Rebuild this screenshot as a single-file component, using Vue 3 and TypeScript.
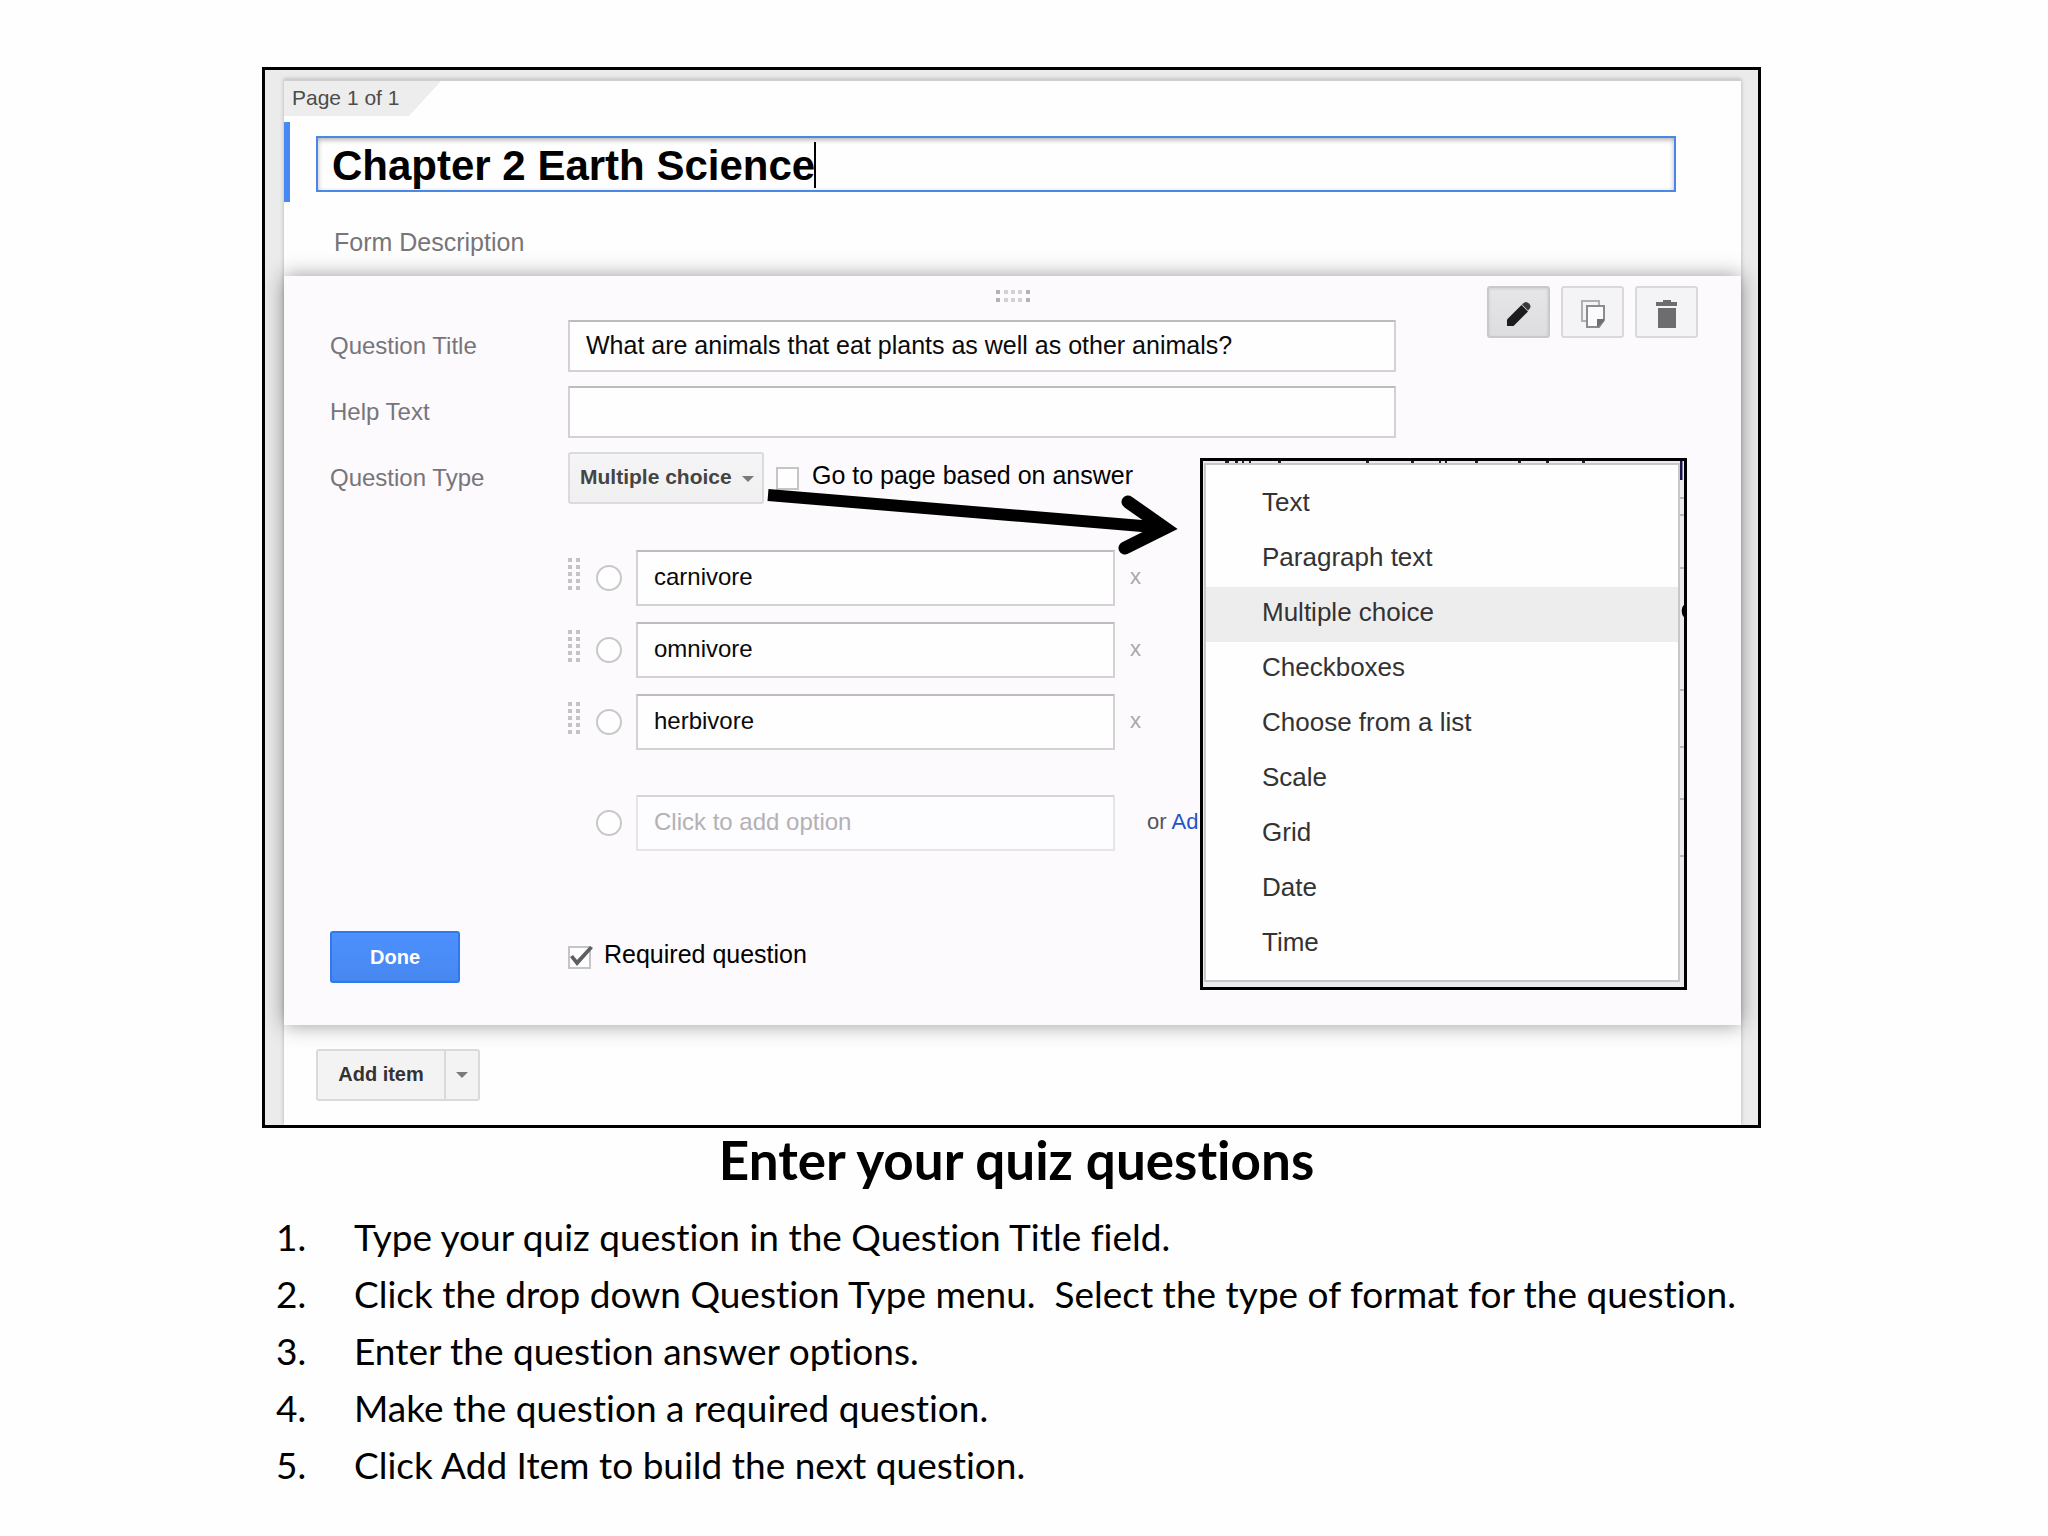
<script setup lang="ts">
import { ref } from 'vue'

interface Option {
  id: string
  text: string
}

const formTitle = ref('Chapter 2 Earth Science')
const questionTitle = ref('What are animals that eat plants as well as other animals?')
const helpText = ref('')
const questionType = ref('Multiple choice')
const goToPage = ref(false)
const required = ref(true)

const options = ref<Option[]>([
  { id: 'option-1', text: 'carnivore' },
  { id: 'option-2', text: 'omnivore' },
  { id: 'option-3', text: 'herbivore' },
])

const questionTypes: string[] = [
  'Text',
  'Paragraph text',
  'Multiple choice',
  'Checkboxes',
  'Choose from a list',
  'Scale',
  'Grid',
  'Date',
  'Time',
]

const steps: string[] = [
  'Type your quiz question in the Question Title field.',
  'Click the drop down Question Type menu.\u00a0 Select the type of format for the question.',
  'Enter the question answer options.',
  'Make the question a required question.',
  'Click Add Item to build the next question.',
]

const gripRows: number[] = [2, 9, 16, 23, 30]
const gripColumns: number[] = [0, 8, 15, 22, 30]
</script>

<template>
  <main class="slide">
    <section class="frame">
      <div class="page">
        <div class="page-tab">Page 1 of 1</div>

        <div class="title-row">
          <div class="title-box">
            <input v-model="formTitle" class="title-input" type="text" aria-label="Form title" />
            <span class="caret"></span>
          </div>
        </div>
        <p class="description">Form Description</p>

        <form class="panel" @submit.prevent>
          <div class="grip-row">
            <svg width="34" height="12" viewBox="0 0 34 12" aria-hidden="true">
              <g v-for="x in gripColumns" :key="x" :fill="x === 0 || x === 30 ? '#b3b1b4' : '#d3d1d4'">
                <rect :x="x" y="0" width="4" height="4" />
                <rect :x="x" y="8" width="4" height="4" />
              </g>
            </svg>
          </div>

          <div class="panel-body">
            <div class="fields">
              <div class="row">
                <label for="question-title">Question Title</label>
                <input id="question-title" v-model="questionTitle" class="text-input" type="text" />
              </div>
              <div class="row">
                <label for="help-text">Help Text</label>
                <input id="help-text" v-model="helpText" class="text-input" type="text" />
              </div>
              <div class="row">
                <label for="question-type">Question Type</label>
                <div class="select-box">
                  <select id="question-type" v-model="questionType">
                    <option v-for="type in questionTypes" :key="type">{{ type }}</option>
                  </select>
                </div>
                <input id="go-to-page" v-model="goToPage" class="check" type="checkbox" />
                <label class="check-label" for="go-to-page">Go to page based on answer</label>
              </div>
            </div>

            <div class="tools">
              <button class="tool active" type="button" aria-label="Edit">
                <svg width="28" height="28" viewBox="0 0 28 28">
                  <path d="M2 19.500 16.500 5l6.500 6.500L8.500 26H2z" fill="#1c1b1e" />
                  <path d="M18 3.500c2-2 4-2 6 0s2 4 0 6l-1 1-6-6z" fill="#3a383c" />
                </svg>
              </button>
              <button class="tool" type="button" aria-label="Duplicate">
                <svg width="28" height="30" viewBox="0 0 28 30" fill="none">
                  <path d="M7 22H3V2h17v4" stroke="#b0afb1" stroke-width="2" />
                  <path d="M8 7h17v14l-5 7H8z" fill="#fbfafc" stroke="#8c8b8e" stroke-width="2" />
                  <path d="M25 20v2l-6 6h-1v-8z" fill="#6f6e71" />
                </svg>
              </button>
              <button class="tool" type="button" aria-label="Delete">
                <svg width="24" height="30" viewBox="0 0 24 30" fill="#6d6c6e">
                  <path d="M8 1h8v2h6v4H1V3h7z" />
                  <path d="M3 9h18v20H3z" />
                </svg>
              </button>
            </div>
          </div>

          <div class="options">
            <div v-for="option in options" :key="option.id" class="option">
              <svg class="option-grip" width="12" height="34" viewBox="0 0 12 34" aria-hidden="true">
                <g v-for="y in gripRows" :key="y" fill="#c4c2c5">
                  <rect x="0" :y="y - 2" width="4" height="4" />
                  <rect x="8" :y="y - 2" width="4" height="4" />
                </g>
              </svg>
              <input class="radio" type="radio" name="answer" :aria-label="option.text" />
              <input v-model="option.text" class="option-input" type="text" :aria-label="option.id" />
              <button class="remove" type="button">x</button>
            </div>
            <div class="option new-option">
              <span class="option-grip"></span>
              <input class="radio" type="radio" name="answer" aria-label="New option" />
              <input
                class="option-input"
                type="text"
                placeholder="Click to add option"
                aria-label="Add option"
              />
              <span class="other">or <a href="#">Ad</a></span>
            </div>
          </div>

          <div class="footer">
            <div class="footer-action">
              <button class="done" type="submit">Done</button>
            </div>
            <span class="tick-box">
              <input id="required" v-model="required" class="check" type="checkbox" />
              <svg v-if="required" class="tick" width="26" height="24" viewBox="0 0 26 24" aria-hidden="true">
                <path d="M2 11 5 9l4 5L22 0l3 2L9 20z" fill="#5f5e61" />
              </svg>
            </span>
            <label class="check-label" for="required">Required question</label>
          </div>

          <svg class="arrow" width="420" height="76" viewBox="0 0 420 76" aria-hidden="true">
            <path d="M4 14 402 47" stroke="#000" stroke-width="12" />
            <path
              d="M364 21 401 47 361 67"
              fill="none"
              stroke="#000"
              stroke-width="13"
              stroke-linecap="round"
              stroke-linejoin="miter"
            />
          </svg>

          <div class="popup">
            <svg class="popup-top" width="378" height="3" viewBox="0 0 378 3" aria-hidden="true">
              <path
                d="M2 1h4M12 1h3M19 1h2M26 1h2M55 1h3M143 1h3M188 1h3M216 1h2M222 1h2M252 1h3M295 1h3M323 1h3M359 1h3"
                stroke="#222"
                stroke-width="2"
              />
            </svg>
            <ul class="menu">
              <li v-for="type in questionTypes" :key="type">
                <button
                  type="button"
                  class="menu-item"
                  :class="{ selected: type === questionType }"
                  @click="questionType = type"
                >
                  {{ type }}
                </button>
              </li>
            </ul>
            <svg class="popup-edge" width="4" height="526" viewBox="0 0 4 526" aria-hidden="true">
              <path d="M1 0v19" stroke="#1a1550" stroke-width="3" />
              <path d="M0 37h4M0 54h4M0 107h4M0 229h4M0 286h4M0 338h4M0 395h4" stroke="#b9b8bb" stroke-width="2" />
              <path d="M4 144v12c-3-2-3-10 0-12z" fill="#000" />
            </svg>
          </div>
        </form>

        <div class="add-item">
          <button class="add-main" type="button">Add item</button>
          <button class="add-more" type="button" aria-label="More item types"></button>
        </div>
      </div>
    </section>

    <section class="notes">
      <h1>Enter your quiz questions</h1>
      <ol>
        <li v-for="step in steps" :key="step">{{ step }}</li>
      </ol>
    </section>
  </main>
</template>

<style>
body {
  margin: 0;
  background: #fefefe;
}
</style>

<style scoped>
* {
  box-sizing: border-box;
}

.slide {
  padding: 67px 287px 0 262px;
  font-family: 'Liberation Sans', Arial, sans-serif;
  color: #000;
}

input,
button,
select {
  margin: 0;
  font-family: inherit;
}

button {
  padding: 0;
}

.frame {
  border: 3px solid #000;
  padding: 9px 17px 0 19px;
  background: #ebebeb;
  overflow: hidden;
}

.page {
  border-top: 2px solid #cfcfcf;
  background: #fefefe;
  box-shadow: 0 0 4px rgba(0, 0, 0, 0.25);
}

.page-tab {
  width: 157px;
  height: 35px;
  padding-left: 8px;
  background: #ededed;
  clip-path: polygon(0 0, 100% 0, 125px 100%, 0 100%);
  color: #4c4c4c;
  font-size: 21px;
  line-height: 34px;
}

.title-row {
  margin-top: 6px;
  padding: 14px 65px 10px 26px;
  border-left: 6px solid #4689f5;
}

.title-box {
  position: relative;
  display: flex;
}

.title-input {
  flex: 1;
  min-width: 0;
  height: 56px;
  padding: 4px 14px 0;
  border: 2px solid #4b87e6;
  outline: none;
  background: #fefefe;
  box-shadow: inset 0 2px 5px rgba(0, 0, 0, 0.3);
  color: #000;
  font-size: 42px;
  font-weight: 700;
}

.caret {
  position: absolute;
  top: 6px;
  left: 498px;
  width: 2px;
  height: 46px;
  background: #000;
}

.description {
  margin: 0;
  padding: 25px 50px 19px;
  color: #77757a;
  font-size: 25px;
  line-height: 30px;
}

.panel {
  position: relative;
  padding: 0 43px 42px 46px;
  background: #fcfafd;
  box-shadow: 0 0 20px rgba(0, 0, 0, 0.4);
}

.grip-row {
  display: flex;
  justify-content: center;
  height: 44px;
  padding: 14px 3px 0 0;
}

.panel-body {
  display: flex;
  gap: 91px;
}

.fields {
  flex: 1;
  min-width: 0;
  display: flex;
  flex-direction: column;
  gap: 14px;
}

.row {
  display: flex;
  align-items: center;
  height: 52px;
}

.row > label:first-child {
  flex: none;
  width: 238px;
  color: #77757a;
  font-size: 24px;
}

.text-input,
.option-input {
  border: 2px solid #d3d1d4;
  border-top-color: #bdbbbe;
  background: #fefefe;
  color: #0a0a0a;
  outline: none;
}

.text-input {
  flex: 1;
  min-width: 0;
  height: 52px;
  padding: 0 16px 2px;
  font-size: 25px;
}

.select-box {
  position: relative;
}

.select-box::after,
.add-more::after {
  content: '';
  border: 6px solid transparent;
  border-top-color: #7a797b;
  border-bottom: 0;
}

.select-box::after {
  position: absolute;
  top: 24px;
  right: 10px;
}

select {
  appearance: none;
  display: block;
  width: 196px;
  height: 52px;
  padding: 0 10px 3px;
  border: 2px solid #dbdadc;
  border-radius: 3px;
  background: linear-gradient(#f5f4f6, #f0f0f0);
  color: #444;
  font-size: 21px;
  font-weight: 700;
}

.check {
  appearance: none;
  flex: none;
  width: 23px;
  height: 23px;
  border: 2px solid #c5c4c6;
  background: #fefefe;
}

.row .check {
  margin-left: 12px;
}

.check-label {
  padding: 0 0 5px 13px;
  font-size: 25px;
  white-space: nowrap;
}

.tools {
  display: flex;
  gap: 11px;
  height: 52px;
  margin-top: -34px;
}

.tool {
  display: flex;
  align-items: center;
  justify-content: center;
  width: 63px;
  height: 52px;
  padding-top: 4px;
  border: 2px solid #d9d8da;
  border-radius: 3px;
  background: #f4f3f5;
}

.tool.active {
  border-color: #c9c8ca;
  background: linear-gradient(#e6e5e7, #dddcde);
  box-shadow: inset 0 1px 3px rgba(0, 0, 0, 0.1);
}

.options {
  display: flex;
  flex-direction: column;
  gap: 16px;
  margin: 46px 0 0 238px;
}

.option {
  display: flex;
  align-items: center;
  height: 56px;
}

.option-grip {
  flex: none;
  width: 12px;
  margin-bottom: 6px;
}

.radio {
  appearance: none;
  flex: none;
  width: 26px;
  height: 26px;
  margin: 0 14px 0 16px;
  border: 2px solid #c8c7c9;
  border-radius: 50%;
  background: #fefefe;
}

.option-input {
  flex: none;
  width: 479px;
  height: 56px;
  padding: 0 16px 2px;
  font-size: 24px;
}

.remove {
  margin-left: 15px;
  padding-bottom: 2px;
  border: 0;
  background: none;
  color: #a8a7a9;
  font-size: 22px;
}

.new-option {
  margin-top: 29px;
}

.new-option .option-input {
  border-color: #e6e4e7;
  border-top-color: #d6d4d7;
  background: #fdfcfe;
}

.option-input::placeholder {
  color: #b3b1b5;
  opacity: 1;
}

.other {
  padding-bottom: 2px;
  margin-left: 32px;
  color: #555;
  font-size: 22px;
}

.other a {
  color: #2554c7;
  text-decoration: none;
}

.footer {
  display: flex;
  align-items: center;
  margin-top: 80px;
}

.footer-action {
  width: 238px;
}

.done {
  display: block;
  width: 130px;
  height: 52px;
  border: 2px solid #3079ed;
  border-radius: 3px;
  background: linear-gradient(#4d90fe, #4787f0);
  color: #fff;
  font-size: 20px;
  font-weight: 700;
}

.tick-box {
  position: relative;
  display: flex;
}

.tick {
  position: absolute;
  top: 0;
  left: 0;
}

.arrow {
  position: absolute;
  top: 205px;
  left: 480px;
}

.popup {
  position: absolute;
  top: 182px;
  right: 54px;
  width: 487px;
  padding: 2px 4px 5px 1px;
  border: 3px solid #000;
  background: #ecebed;
}

.popup-top {
  position: absolute;
  top: 0;
  left: 20px;
}

.popup-edge {
  position: absolute;
  top: 0;
  right: 0;
}

.menu {
  margin: 0;
  padding: 12px 0 8px;
  border: 2px solid #c9c7ca;
  background: #fefefe;
  list-style: none;
}

.menu-item {
  display: block;
  width: 100%;
  height: 55px;
  padding: 0 0 4px 56px;
  border: 0;
  background: none;
  color: #333;
  font-size: 26px;
  text-align: left;
}

.menu-item.selected {
  background: #eeedee;
}

.add-item {
  display: flex;
  padding: 24px 32px;
}

.add-main,
.add-more {
  height: 52px;
  border: 2px solid #dad9db;
  background: #f4f3f4;
  color: #333;
}

.add-main {
  width: 130px;
  padding-bottom: 2px;
  border-radius: 3px 0 0 3px;
  font-size: 20px;
  font-weight: 700;
}

.add-more {
  display: flex;
  align-items: center;
  justify-content: center;
  width: 36px;
  margin-left: -2px;
  border-radius: 0 3px 3px 0;
}

.notes {
  padding-left: 10px;
  font-family: Lato, Carlito, Calibri, sans-serif;
  font-variant-ligatures: none;
}

h1 {
  margin: 0;
  font-size: 53px;
  line-height: 64px;
  text-align: center;
}

ol {
  margin: 16px 0 0;
  padding: 0;
  list-style: none;
  counter-reset: step;
  font-size: 37px;
  line-height: 57px;
}

ol li {
  display: flex;
  counter-increment: step;
  white-space: nowrap;
}

ol li::before {
  content: counter(step) '.';
  flex: none;
  width: 78px;
  padding-left: 4px;
}
</style>
